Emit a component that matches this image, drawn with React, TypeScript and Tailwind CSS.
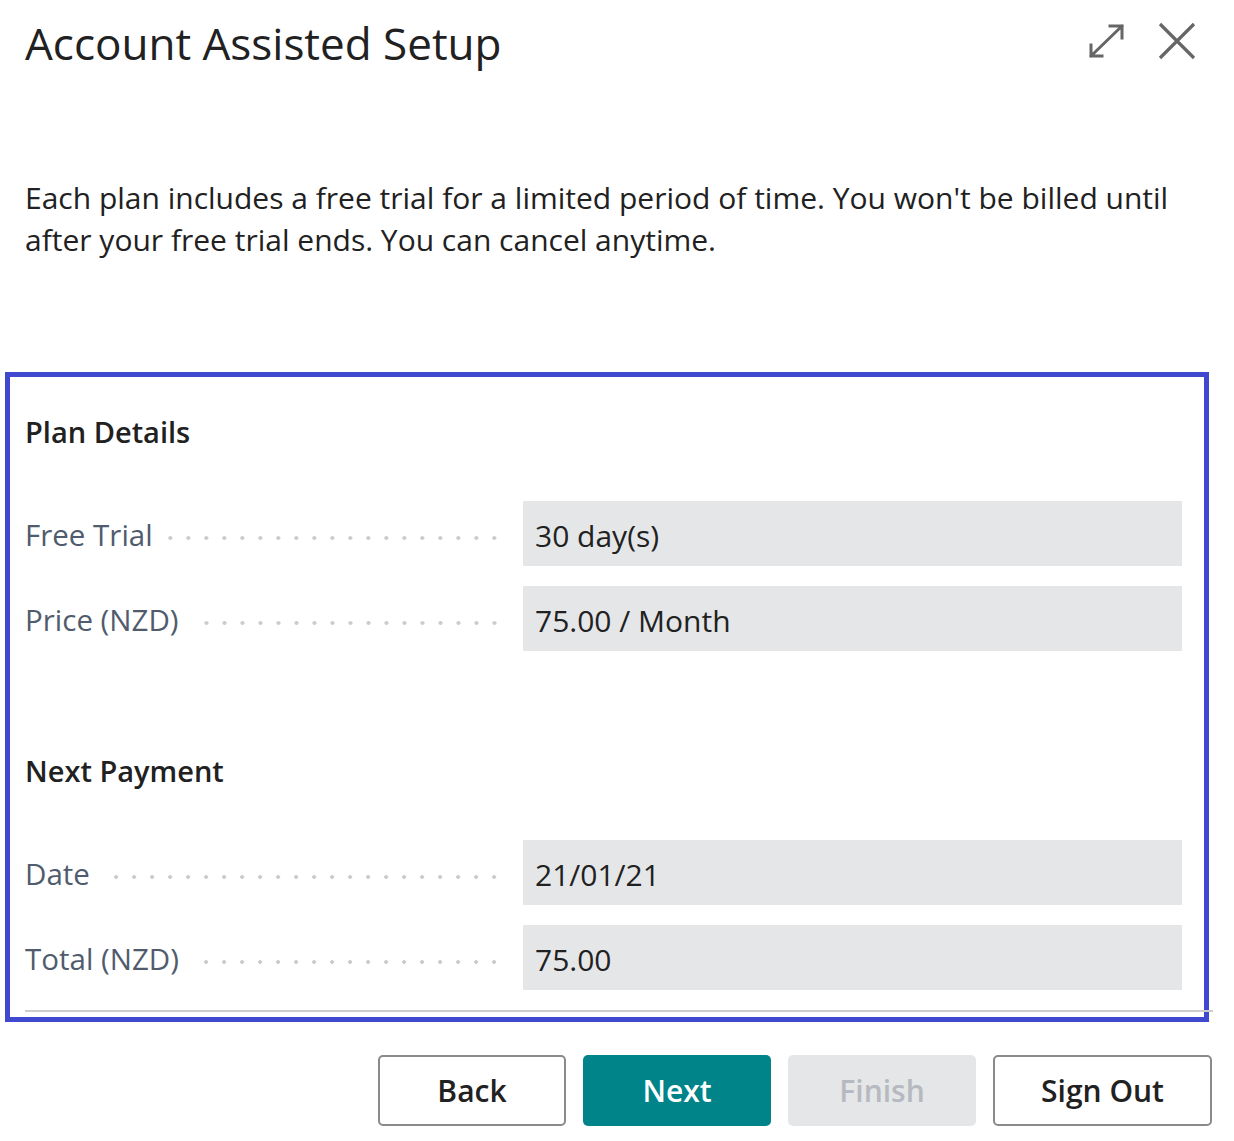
import React from "react";

const font = { fontFamily: '"Segoe UI", "Open Sans", "Noto Sans", sans-serif' };

const ExpandIcon = () => (
  <svg width="36" height="36" viewBox="0 0 36 36" fill="none" aria-hidden="true">
    <path
      d="M3 33L34 3M22 3h12v12M3 22v11h11"
      stroke="#666666"
      strokeWidth="3"
      strokeLinecap="square"
    />
  </svg>
);

const CloseIcon = () => (
  <svg width="38" height="38" viewBox="0 0 38 38" fill="none" aria-hidden="true">
    <path d="M2 2l34 34M36 2L2 36" stroke="#666666" strokeWidth="3.2" />
  </svg>
);

interface FieldProps {
  label: string;
  value: string;
}

const Field = ({ label, value }: FieldProps) => (
  <div className="grid grid-cols-[472px_1fr] gap-x-[26px] h-[65px]">
    <div className="flex items-center pt-[3px]">
      <span className="text-[29.5px] text-[#505c6d] whitespace-nowrap">{label}</span>
      <div className="flex-1 ml-[12px] h-[8px] mt-[6px] bg-[radial-gradient(circle,#c9ccd1_1.7px,transparent_2.2px)] bg-[length:18px_8px] bg-repeat-x bg-[position:right_-6px_center]" />
    </div>
    <div className="flex items-center bg-[#e5e6e8] pl-[12px] pt-[3px] text-[30px] text-[#212121]">
      {value}
    </div>
  </div>
);

const Section = ({
  title,
  children,
}: {
  title: string;
  children: React.ReactNode;
}) => (
  <div>
    <h3 className="text-[29px] leading-[40px] font-semibold text-[#212121] mb-[49px]">{title}</h3>
    <div className="flex flex-col gap-[20px]">{children}</div>
  </div>
);

export default function App() {
  return (
    <div className="w-[1234px] h-[1141px] bg-white overflow-hidden" style={font}>
      <div className="flex items-center justify-between h-[86px] pl-[25px] pr-[38px]">
        <h1 className="text-[44px] leading-[56px] text-[#212121] font-medium">
          Account Assisted Setup
        </h1>
        <div className="flex items-center gap-[34px] -mt-[4px]">
          <ExpandIcon />
          <CloseIcon />
        </div>
      </div>

      <p className="mt-[91px] pl-[25px] pr-[30px] text-[30px] leading-[42px] text-[#212121]">
        Each plan includes a free trial for a limited period of time. You won't be billed until
        after your free trial ends. You can cancel anytime.
      </p>

      <div className="ml-[5px] mt-[111px] w-[1204px] border-[5px] border-[#4048cf] pl-[15px] pr-[22px] pt-[35px] pb-[5px]">
        <Section title="Plan Details">
          <Field label="Free Trial" value="30 day(s)" />
          <Field label="Price (NZD)" value="75.00 / Month" />
        </Section>
        <div className="pt-[100px]">
          <Section title="Next Payment">
            <Field label="Date" value="21/01/21" />
            <Field label="Total (NZD)" value="75.00" />
          </Section>
        </div>
        <div className="mt-[20px] h-[2px] bg-[#cccccc] -mr-[31px]" />
      </div>

      <div className="flex justify-end gap-[17px] pr-[22px] mt-[33px]">
        <button
          type="button"
          className="w-[188px] h-[71px] rounded-[5px] border-2 border-[#8a8a8a] bg-white text-[30px] font-semibold text-[#212121]"
        >
          Back
        </button>
        <button
          type="button"
          className="w-[188px] h-[71px] rounded-[5px] bg-[#008489] text-[30px] font-semibold text-white"
        >
          Next
        </button>
        <button
          type="button"
          className="w-[188px] h-[71px] rounded-[5px] bg-[#e5e6e8] text-[30px] font-semibold text-[#b6bac0]"
        >
          Finish
        </button>
        <button
          type="button"
          className="w-[219px] h-[71px] rounded-[5px] border-2 border-[#8a8a8a] bg-white text-[30px] font-semibold text-[#212121]"
        >
          Sign Out
        </button>
      </div>
    </div>
  );
}
